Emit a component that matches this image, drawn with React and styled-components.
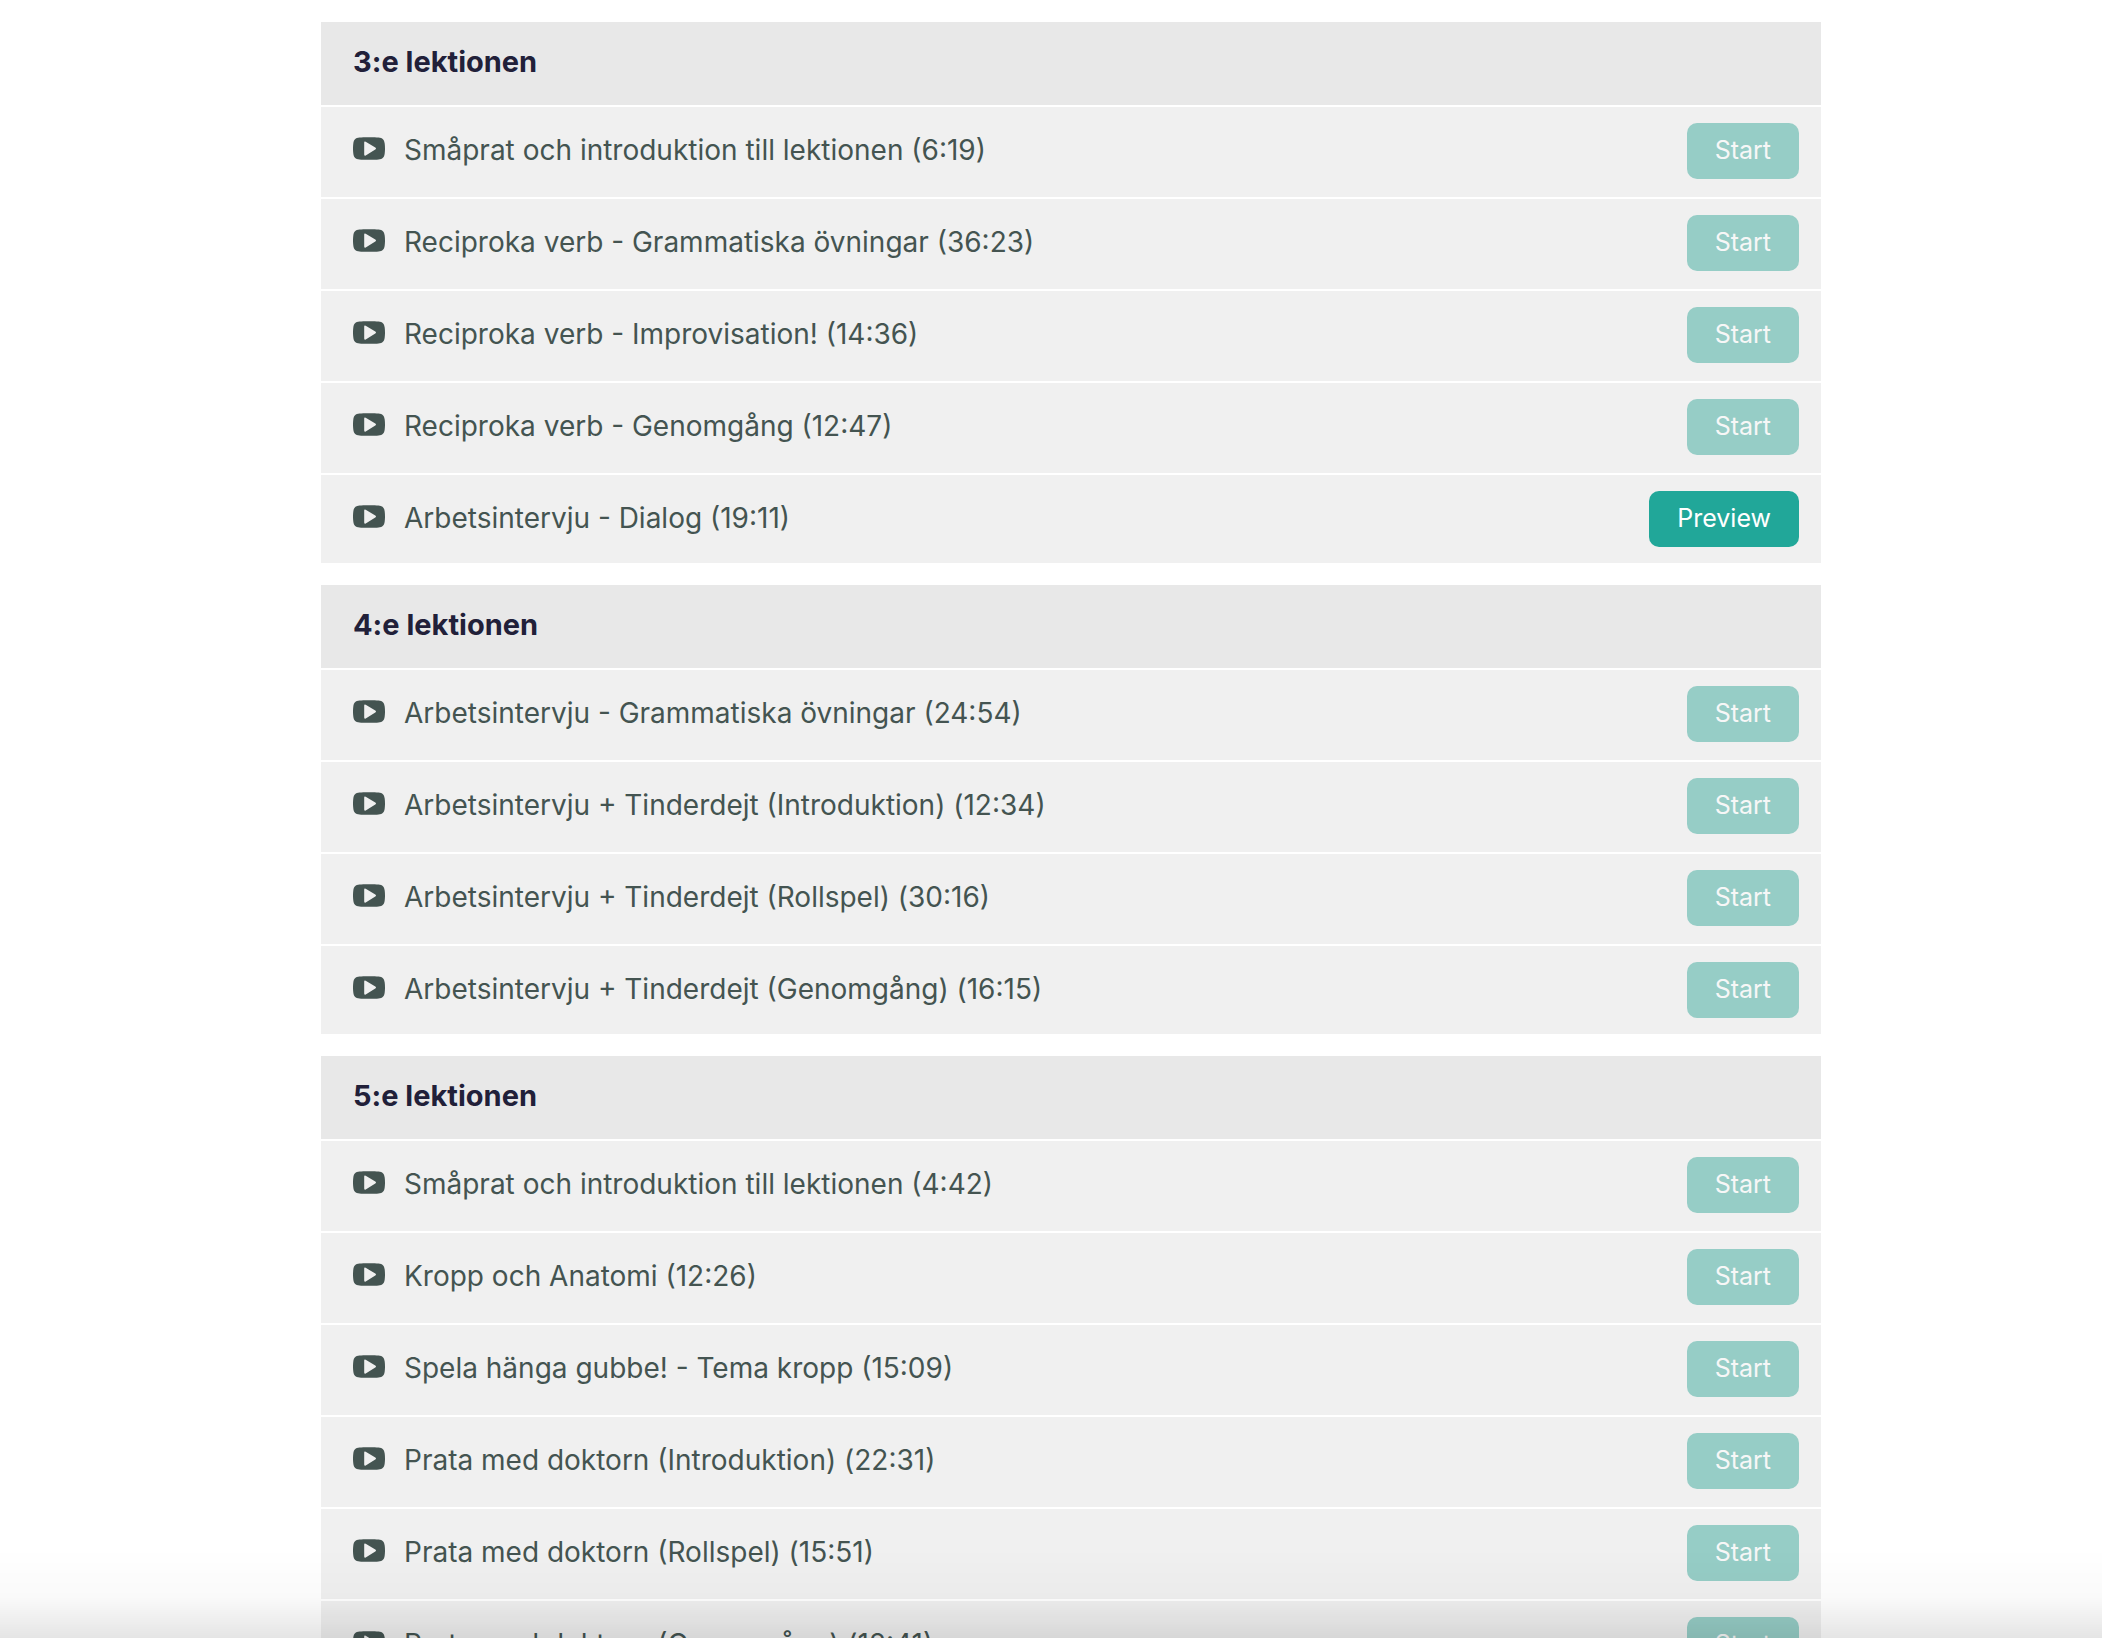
import styled, { createGlobalStyle } from 'styled-components';

const sections = [
    {
        title: '3:e lektionen',
        lectures: [
            { name: 'Småprat och introduktion till lektionen', time: '6:19' },
            { name: 'Reciproka verb - Grammatiska övningar', time: '36:23' },
            { name: 'Reciproka verb - Improvisation!', time: '14:36' },
            { name: 'Reciproka verb - Genomgång', time: '12:47' },
            { name: 'Arbetsintervju - Dialog', time: '19:11', preview: true },
        ],
    },
    {
        title: '4:e lektionen',
        lectures: [
            { name: 'Arbetsintervju - Grammatiska övningar', time: '24:54' },
            {
                name: 'Arbetsintervju + Tinderdejt (Introduktion)',
                time: '12:34',
            },
            { name: 'Arbetsintervju + Tinderdejt (Rollspel)', time: '30:16' },
            { name: 'Arbetsintervju + Tinderdejt (Genomgång)', time: '16:15' },
        ],
    },
    {
        title: '5:e lektionen',
        lectures: [
            { name: 'Småprat och introduktion till lektionen', time: '4:42' },
            { name: 'Kropp och Anatomi', time: '12:26' },
            { name: 'Spela hänga gubbe! - Tema kropp', time: '15:09' },
            { name: 'Prata med doktorn (Introduktion)', time: '22:31' },
            { name: 'Prata med doktorn (Rollspel)', time: '15:51' },
            { name: 'Prata med doktorn (Genomgång)', time: '12:41' },
        ],
    },
];

function VideoIcon() {
    return (
        <Icon viewBox="0 0 32 23" aria-hidden="true">
            <path
                fillRule="evenodd"
                d="M6.5 .5C10 .1 22 .1 25.500 .5C29.500 .9 31.300 2.600 31.700 6.500C32.100 10 32.100 13 31.700 16.500C31.300 20.400 29.500 22.100 25.500 22.500C22 22.900 10 22.900 6.500 22.500C2.500 22.100 .7 20.400 .3 16.500C-.1 13 -.1 10 .3 6.500C.7 2.600 2.500 .9 6.500 .5ZM11.200 5.500V17.500Q11.200 19.200 12.700 18.400L22.300 12.600Q23.700 11.600 22.300 10.600L12.700 4.800Q11.200 4 11.200 5.500Z"
            />
        </Icon>
    );
}

function Lecture({ name, time, preview }) {
    return (
        <Row>
            <VideoIcon />
            <LectureName>
                {name} ({time})
            </LectureName>
            <StartButton type="button" $preview={preview}>
                {preview ? 'Preview' : 'Start'}
            </StartButton>
        </Row>
    );
}

function App() {
    return (
        <Page>
            <GlobalStyle />
            <Curriculum>
                {sections.map((section) => (
                    <section key={section.title}>
                        <SectionTitle>{section.title}</SectionTitle>
                        <Lectures>
                            {section.lectures.map((lecture) => (
                                <Lecture key={lecture.name} {...lecture} />
                            ))}
                        </Lectures>
                    </section>
                ))}
            </Curriculum>
            <BottomShade />
        </Page>
    );
}

const GlobalStyle = createGlobalStyle`
    * {
        box-sizing: border-box;
    }

    body {
        margin: 0;
        background: #ffffff;
        font-family: Inter, 'Open Sans', sans-serif;
    }
`;

const Page = styled.div`
    height: 100vh;
    overflow-y: auto;
    scrollbar-width: none;
    padding: 22px 0 22px 40px;
`;

const Curriculum = styled.main`
    display: flex;
    flex-direction: column;
    gap: 22px;
    width: 100%;
    max-width: 1500px;
    margin: 0 auto;
`;

const SectionTitle = styled.h2`
    margin: 0 0 2px;
    padding: 22px 32px 25px;
    background: #e8e8e8;
    color: #212039;
    font-weight: 700;
    font-size: 29px;
    line-height: 36px;
`;

const Lectures = styled.ul`
    display: flex;
    flex-direction: column;
    gap: 2px;
    margin: 0;
    padding: 0;
    list-style: none;
`;

const Row = styled.li`
    display: flex;
    align-items: flex-start;
    padding: 16px 22px 18px 32px;
    background: #f0f0f0;

    &:last-child {
        padding-bottom: 16px;
    }
`;

const Icon = styled.svg`
    flex-shrink: 0;
    width: 32px;
    height: 23px;
    margin-top: 14px;
    fill: #445451;
`;

const LectureName = styled.span`
    flex: 1;
    margin-left: 19px;
    padding: 9px 0;
    color: #445451;
    font-size: 28px;
    line-height: 36px;
`;

const StartButton = styled.button`
    height: 56px;
    padding: 0 28px 2px;
    border: none;
    border-radius: 10px;
    background: ${(props) => (props.$preview ? '#21a799' : '#96cdc6')};
    color: ${(props) => (props.$preview ? '#ffffff' : '#f7f7f7')};
    font-family: inherit;
    font-size: 25px;
    line-height: 32px;
    cursor: pointer;
`;

const BottomShade = styled.div`
    position: fixed;
    left: 0;
    right: 0;
    bottom: 0;
    height: 90px;
    background: linear-gradient(
        to bottom,
        rgba(0, 0, 0, 0),
        rgba(0, 0, 0, 0.02) 55%,
        rgba(0, 0, 0, 0.1)
    );
    pointer-events: none;
`;

export default App;
